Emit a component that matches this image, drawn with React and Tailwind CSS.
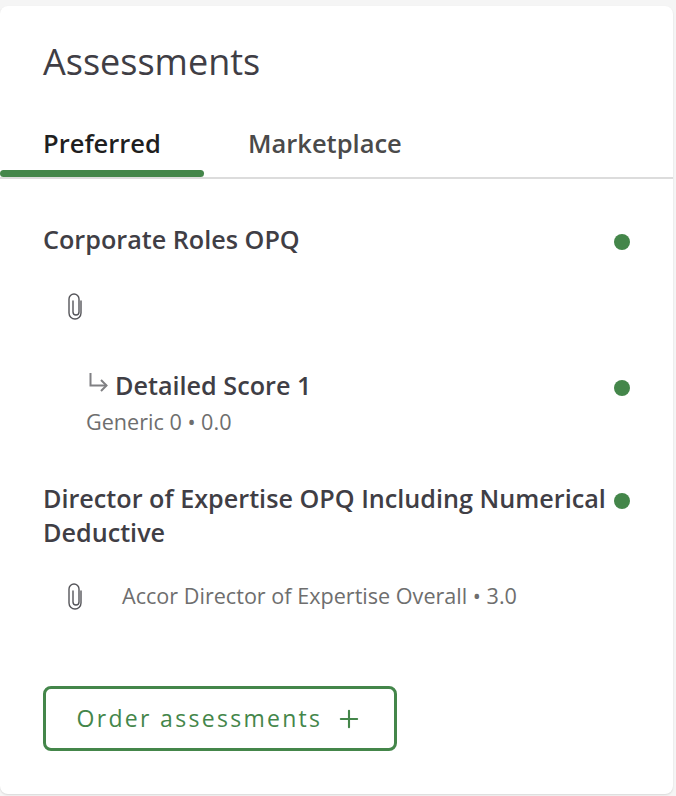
import { Plus } from "lucide-react";

function Dot() {
  return <span className="block w-4 h-4 shrink-0 rounded-full bg-[#44864a]" />;
}

function Clip() {
  return (
    <svg width="14" height="28" viewBox="0 0 14 28" fill="none" stroke="#55555a" strokeWidth="1.4" strokeLinecap="round">
      <path d="M13 9v12a6 6 0 0 1-12 0V7a5 5 0 0 1 10 0v13a3 3 0 0 1-6 0V9" />
    </svg>
  );
}

function SubArrow() {
  return (
    <svg width="20" height="20" viewBox="0 0 20 20" fill="none" stroke="#808083" strokeWidth="2">
      <path d="M1.500 1v12.500h16" />
      <path d="M12 8l5.500 5.500-5.500 5.500" />
    </svg>
  );
}

export default function App() {
  return (
    <div className="h-[796px] bg-[#f5f5f5] pt-[6px] pr-[3px] pb-[2px] font-['Open_Sans',sans-serif]">
      <div className="h-full bg-white rounded-lg shadow-[0_1px_2px_rgba(0,0,0,0.12)] flex flex-col">
        <h1 className="pl-[43px] pt-[32px] text-[36px] leading-[48px] text-[#403e45]">Assessments</h1>

        {/* Tabs */}
        <div className="mt-[39px] flex border-b-2 border-[#dcdcdc] h-[54px]">
          <div className="relative w-[204px] pl-[43px] pt-[2px] text-[25.5px] leading-[32px] font-semibold text-[#1f1f1f]">
            Preferred
            <span className="absolute left-0 right-0 bottom-0 h-[7px] rounded-full bg-[#44864a]" />
          </div>
          <div className="pl-[44px] pt-[2px] text-[25.5px] leading-[32px] font-semibold text-[#4a4a4a]">Marketplace</div>
        </div>

        <div className="pl-[43px] pr-[43px] pt-[43px] flex flex-col">
          <div className="flex items-center justify-between">
            <div className="text-[25.2px] leading-[34px] font-semibold text-[#403e45]">Corporate Roles OPQ</div>
            <div className="pt-[6px]"><Dot /></div>
          </div>
          <div className="mt-[36px] pl-[25px] h-[28px]"><Clip /></div>

          <div className="mt-[48px] pl-[46px] flex items-center justify-between">
            <div className="flex items-center gap-[6px]">
              <div className="pb-[6px]"><SubArrow /></div>
              <span className="text-[25.2px] leading-[34px] font-semibold text-[#403e45]">Detailed Score 1</span>
            </div>
            <div className="pt-[6px]"><Dot /></div>
          </div>
          <div className="pl-[43px] mt-[6px] text-[21.6px] leading-[28px] text-[#6e6e6e]">Generic 0 • 0.0</div>

          <div className="mt-[45px] flex items-start justify-between">
            <div className="text-[25.2px] leading-[34px] font-semibold text-[#403e45] w-[570px]">
              Director of Expertise OPQ Including Numerical Deductive
            </div>
            <div className="pt-[12px]"><Dot /></div>
          </div>
          <div className="mt-[33px] pl-[25px] flex items-center">
            <Clip />
            <span className="pl-[40px] text-[21.6px] leading-[28px] text-[#6e6e6e]">Accor Director of Expertise Overall • 3.0</span>
          </div>

          <button className="mt-[76px] w-[354px] h-[65px] flex items-center justify-center gap-[13px] border-[3px] border-[#44864a] rounded-lg text-[23px] font-medium tracking-[2.3px] text-[#44864a]">
            Order assessments
            <Plus className="w-7 h-7" strokeWidth={1.8} />
          </button>
        </div>
      </div>
    </div>
  );
}
